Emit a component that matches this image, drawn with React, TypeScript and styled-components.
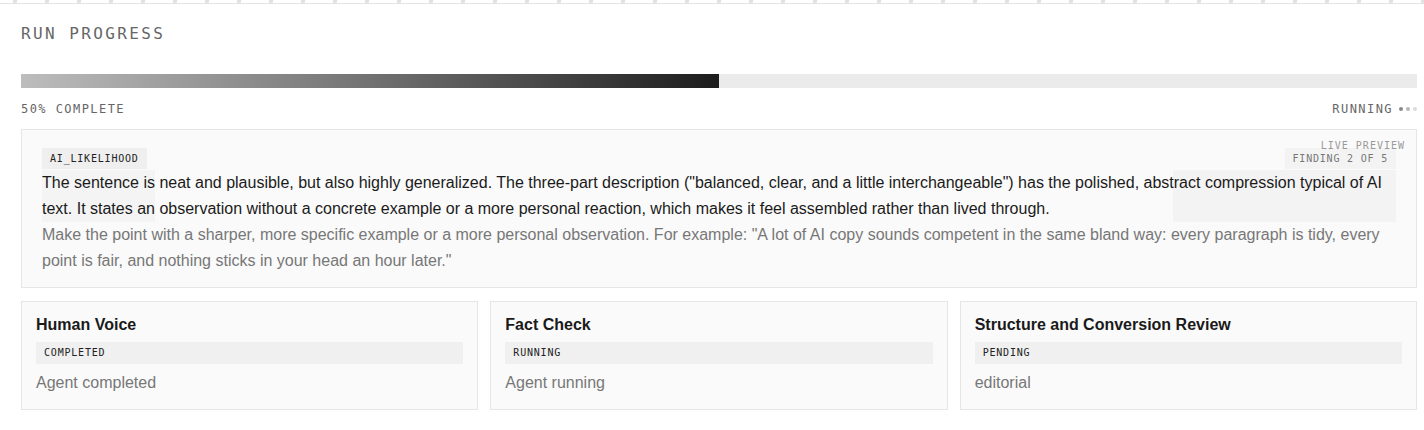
import styled, { createGlobalStyle } from 'styled-components'

const GlobalStyle = createGlobalStyle`
  html, body {
    margin: 0;
    padding: 0;
    background: #ffffff;
  }
  body {
    font-family: "Liberation Sans", Arial, sans-serif;
    color: #1a1a1a;
  }
`

const mono = `"DejaVu Sans Mono", "Liberation Mono", monospace`

const TopRule = styled.div`
  height: 3px;
  border-bottom: 1px solid #e3e3e3;
  background-image: radial-gradient(circle, #e2e2e2 2px, transparent 2.6px);
  background-size: 32px 6px;
  background-position: -1px -2px;
`

const Page = styled.main`
  padding: 0 7px 20px 21px;
`

const Heading = styled.h2`
  margin: 20px 0 0;
  font-family: ${mono};
  font-size: 16px;
  line-height: 20px;
  font-weight: 400;
  letter-spacing: 0.15em;
  color: #666;
`

const Track = styled.div`
  margin-top: 30px;
  height: 14px;
  background: #ebebeb;
`

const Fill = styled.div`
  height: 100%;
  background: linear-gradient(90deg, #bdbdbd 0%, #7a7a7a 45%, #1c1c1c 100%);
`

const StatusRow = styled.div`
  margin-top: 13px;
  display: flex;
  justify-content: space-between;
  align-items: center;
  font-family: ${mono};
  font-size: 12px;
  line-height: 16px;
  letter-spacing: 0.12em;
  color: #666;
`

const Running = styled.span`
  display: flex;
  align-items: center;
  gap: 6px;
`

const Dots = styled.span`
  display: flex;
  gap: 3px;
`

const Dot = styled.i<{ $shade: string }>`
  width: 4px;
  height: 4px;
  border-radius: 50%;
  background: ${(p) => p.$shade};
`

const Preview = styled.section`
  position: relative;
  margin-top: 12px;
  padding: 18px 20px 13px;
  background: #fafafa;
  border: 1px solid #e6e6e6;
`

const PreviewLabel = styled.span`
  position: absolute;
  top: 9px;
  right: 11px;
  font-family: ${mono};
  font-size: 10px;
  line-height: 13px;
  letter-spacing: 0.1em;
  color: #999;
`

const PreviewHead = styled.div`
  display: flex;
  justify-content: space-between;
  align-items: flex-start;
  margin-bottom: 1px;
`

const Tag = styled.span<{ $muted?: boolean }>`
  display: inline-block;
  padding: 4px 8px;
  font-family: ${mono};
  font-size: 10px;
  line-height: 13px;
  letter-spacing: 0.08em;
  color: ${(p) => (p.$muted ? '#777' : '#222')};
  background: ${(p) => (p.$muted ? '#f3f3f3' : '#efefef')};
`

const Finding = styled.p`
  margin: 0;
  font-size: 16px;
  line-height: 26px;
  color: #1a1a1a;
  background: linear-gradient(90deg, #f4f4f4 0, #f4f4f4 113px, #fafafa 113px, #fafafa 1131px, #f3f3f3 1131px);
`

const Advice = styled.p`
  margin: 0;
  font-size: 16px;
  line-height: 26px;
  color: #777;
`

const Agents = styled.div`
  margin-top: 13px;
  display: grid;
  grid-template-columns: repeat(3, 1fr);
  gap: 12px;
`

const AgentCard = styled.article`
  padding: 14px 14px 15px;
  background: #fafafa;
  border: 1px solid #e6e6e6;
`

const AgentName = styled.h3`
  margin: 0;
  font-size: 16px;
  line-height: 18px;
  font-weight: 700;
  color: #1a1a1a;
`

const AgentState = styled(Tag)`
  display: block;
  margin: 8px 0;
  line-height: 14px;
  color: #222;
  background: #f0f0f0;
`

const AgentNote = styled.p`
  margin: 0;
  font-size: 16px;
  line-height: 22px;
  color: #777;
`

const agents = [
  { name: 'Human Voice', state: 'COMPLETED', note: 'Agent completed' },
  { name: 'Fact Check', state: 'RUNNING', note: 'Agent running' },
  { name: 'Structure and Conversion Review', state: 'PENDING', note: 'editorial' },
]

export default function App() {
  const progress = 50
  return (
    <>
      <GlobalStyle />
      <TopRule />
      <Page>
        <Heading>RUN PROGRESS</Heading>
        <Track>
          <Fill style={{ width: `${progress}%` }} />
        </Track>
        <StatusRow>
          <span>{progress}% COMPLETE</span>
          <Running>
            RUNNING
            <Dots>
              <Dot $shade="#8a8a8a" />
              <Dot $shade="#b8b8b8" />
              <Dot $shade="#dcdcdc" />
            </Dots>
          </Running>
        </StatusRow>

        <Preview>
          <PreviewLabel>LIVE PREVIEW</PreviewLabel>
          <PreviewHead>
            <Tag>AI_LIKELIHOOD</Tag>
            <Tag $muted>FINDING 2 OF 5</Tag>
          </PreviewHead>
          <Finding>
            The sentence is neat and plausible, but also highly generalized. The three-part description
            ("balanced, clear, and a little interchangeable") has the polished, abstract compression typical
            of AI text. It states an observation without a concrete example or a more personal reaction, which
            makes it feel assembled rather than lived through.
          </Finding>
          <Advice>
            Make the point with a sharper, more specific example or a more personal observation. For example:
            "A lot of AI copy sounds competent in the same bland way: every paragraph is tidy, every point is
            fair, and nothing sticks in your head an hour later."
          </Advice>
        </Preview>

        <Agents>
          {agents.map((a) => (
            <AgentCard key={a.name}>
              <AgentName>{a.name}</AgentName>
              <AgentState>{a.state}</AgentState>
              <AgentNote>{a.note}</AgentNote>
            </AgentCard>
          ))}
        </Agents>
      </Page>
    </>
  )
}
